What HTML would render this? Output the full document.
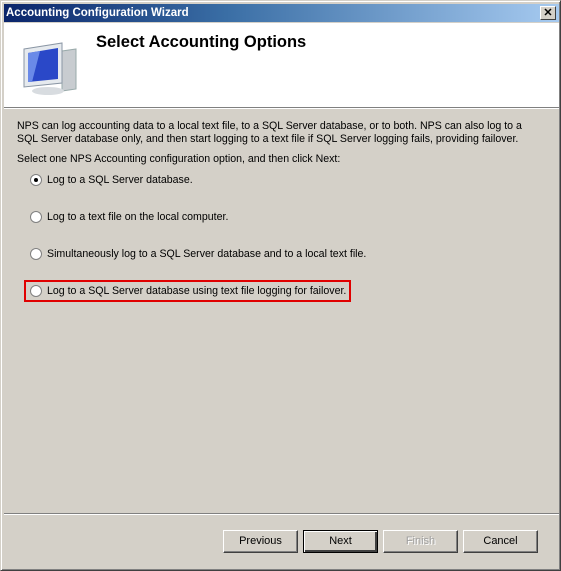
<!DOCTYPE html>
<html><head><style>
body{margin:0;width:561px;height:571px;overflow:hidden;font-family:"Liberation Sans",sans-serif;font-size:10.6px;color:#000}
.win{position:absolute;left:0;top:0;width:559px;height:569px;background:#d4d0c8;border:1px solid;border-color:#d4d0c8 #404040 #404040 #d4d0c8;box-shadow:inset 1px 1px #fff,inset -1px -1px #808080}
.title{position:absolute;left:3px;top:3px;width:555px;height:18px;background:linear-gradient(to right,#0a246a,#3a6ea5 40%,#a6caf0);color:#fff;font-weight:bold;font-size:11.5px;line-height:18px;padding-left:2px;box-sizing:border-box}
.x{position:absolute;right:3px;top:2px;width:16px;height:14px;background:#d4d0c8;border:1px solid;border-color:#fff #404040 #404040 #fff;color:#000;font-size:11px;line-height:13px;text-align:center;box-sizing:border-box}
.head{position:absolute;left:3px;top:22px;width:555px;height:84px;background:#fff;border-bottom:1px solid #808080}
.head h1{position:absolute;left:92px;top:10px;margin:0;font-size:16.5px;font-weight:bold}
.sep{position:absolute;left:3px;top:107px;width:555px;height:1px;background:#fff}
p{position:absolute;left:16px;margin:0;line-height:13px}
.r{position:absolute;left:29px;line-height:13px}
.r i{position:absolute;left:0;top:0;width:12px;height:12px;border-radius:50%;background:#fff;border:1px solid #808080;box-sizing:border-box}
.r i b{position:absolute;left:3px;top:3px;width:4px;height:4px;border-radius:50%;background:#000}
.r span{position:absolute;left:17px;top:0;white-space:nowrap}
.hl{position:absolute;left:23px;top:279px;width:327px;height:22px;border:2px solid #e00000;box-sizing:border-box}
.bsep{position:absolute;left:3px;top:512px;width:555px;height:1px;background:#808080;border-bottom:1px solid #fff}
.btn{position:absolute;top:529px;width:75px;height:23px;border:1px solid;border-color:#fff #404040 #404040 #fff;box-shadow:inset -1px -1px #808080;text-align:center;line-height:21px;box-sizing:border-box;font-size:11px}
</style></head><body>
<div class="win">
<div class="title">Accounting Configuration Wizard<div class="x">✕</div></div>
<div class="head"><h1>Select Accounting Options</h1>
<svg style="position:absolute;left:14px;top:16px" width="62" height="58" viewBox="0 0 62 58">
<polygon points="44,12 58,10 58,50 44,52" fill="#c8ccd0" stroke="#9aa" />
<ellipse cx="30" cy="52" rx="16" ry="4" fill="#d8dce0"/>
<polygon points="6,10 44,4 44,44 6,48" fill="#e6eaee" stroke="#8a96a4"/>
<polygon points="10,14 40,9 40,40 10,43" fill="#2a48c8"/>
<polygon points="10,14 22,12 14,43 10,43" fill="#6a8ae8"/>
</svg></div>
<div class="sep"></div>
<p style="top:119px">NPS can log accounting data to a local text file, to a SQL Server database, or to both. NPS can also log to a<br>SQL Server database only, and then start logging to a text file if SQL Server logging fails, providing failover.</p>
<p style="top:152px">Select one NPS Accounting configuration option, and then click Next:</p>
<div class="r" style="top:173px"><i><b></b></i><span>Log to a SQL Server database.</span></div>
<div class="r" style="top:210px"><i></i><span>Log to a text file on the local computer.</span></div>
<div class="r" style="top:247px"><i></i><span>Simultaneously log to a SQL Server database and to a local text file.</span></div>
<div class="r" style="top:284px"><i></i><span>Log to a SQL Server database using text file logging for failover.</span></div>
<div class="hl"></div>
<div class="bsep"></div>
<div class="btn" style="left:222px">Previous</div>
<div class="btn" style="left:302px;border:1px solid #000;box-shadow:inset 1px 1px #fff,inset -2px -2px #404040">Next</div>
<div class="btn" style="left:382px;color:#a0a0a0;text-shadow:1px 1px #fff">Finish</div>
<div class="btn" style="left:462px">Cancel</div>
</div>
</body></html>
